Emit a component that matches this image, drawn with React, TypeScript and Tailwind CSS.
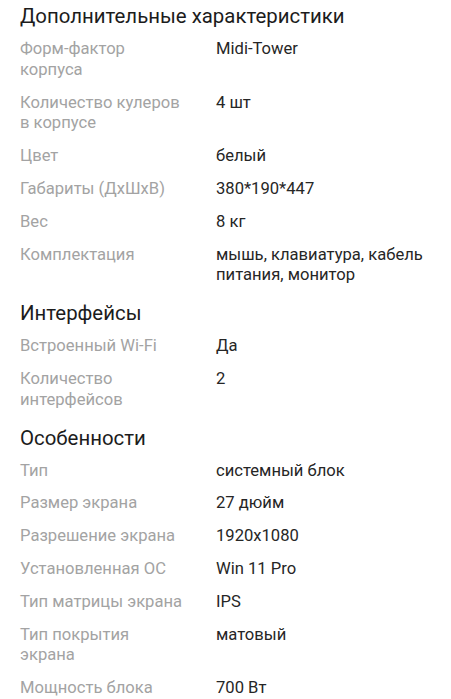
const sections: { title: string; rows: [string, string][] }[] = [
  {
    title: "Дополнительные характеристики",
    rows: [
      ["Форм-фактор корпуса", "Midi-Tower"],
      ["Количество кулеров в корпусе", "4 шт"],
      ["Цвет", "белый"],
      ["Габариты (ДхШхВ)", "380*190*447"],
      ["Вес", "8 кг"],
      ["Комплектация", "мышь, клавиатура, кабель питания, монитор"],
    ],
  },
  {
    title: "Интерфейсы",
    rows: [
      ["Встроенный Wi-Fi", "Да"],
      ["Количество интерфейсов", "2"],
    ],
  },
  {
    title: "Особенности",
    rows: [
      ["Тип", "системный блок"],
      ["Размер экрана", "27 дюйм"],
      ["Разрешение экрана", "1920x1080"],
      ["Установленная ОС", "Win 11 Pro"],
      ["Тип матрицы экрана", "IPS"],
      ["Тип покрытия экрана", "матовый"],
      ["Мощность блока", "700 Вт"],
    ],
  },
]

export default function App() {
  return (
    <div className="min-h-screen bg-white px-5 font-['Roboto',sans-serif]">
      {sections.map((s, i) => (
        <div key={s.title} className={i === 0 ? "pt-[4px]" : "pt-[15px]"}>
          {/* Section title */}
          <h2 className="text-[20.4px] leading-[24px] text-[#1c1c1c]">{s.title}</h2>
          <div className="flex flex-col gap-[12px] pt-[11px]">
            {s.rows.map(([label, value]) => (
              <div key={label} className="grid grid-cols-[196px_1fr] text-[16.6px] leading-[20.8px]">
                <div className="pr-[29px] text-[#a3a3a3]">{label}</div>
                <div className="text-[#262626]">{value}</div>
              </div>
            ))}
          </div>
        </div>
      ))}
    </div>
  )
}
